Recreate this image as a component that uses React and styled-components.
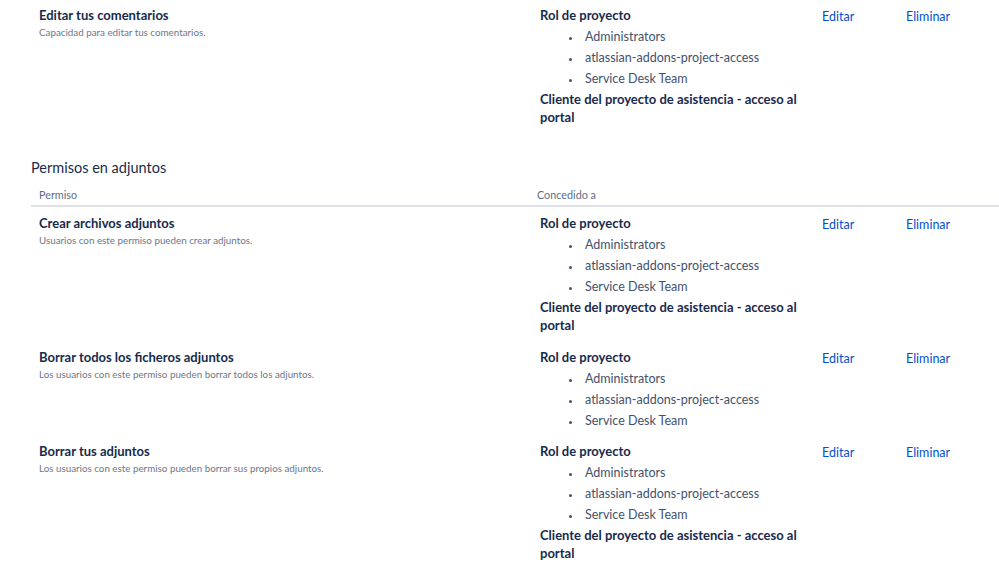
import React from 'react';
import styled, { createGlobalStyle } from 'styled-components';

const Global = createGlobalStyle`
  html, body { margin: 0; padding: 0; background: #fff; }
  body {
    font-family: Lato, "Open Sans", sans-serif;
    color: #172b4d;
    overflow: hidden;
  }
`;

const Page = styled.div`
  padding: 0 0 0 31px;
  margin-top: -1px;
`;

const SectionTitle = styled.h3`
  margin: 0;
  padding: 25px 0 0;
  font-size: 14.5px;
  font-weight: 400;
  line-height: 20px;
  color: #172b4d;
`;

const Grid = styled.div`
  display: grid;
  grid-template-columns: 498px 285px 84px 1fr;
`;

const HeadRow = styled(Grid)`
  margin-top: 6px;
  border-bottom: 2px solid #dfe1e6;
`;

const HeadCell = styled.div`
  padding: 3px 8px 2px;
  font-size: 10.8px;
  line-height: 16px;
  color: #5e6c84;
`;

const Row = styled(Grid)`
  padding: 7px 0;
`;

const Cell = styled.div`
  padding: 0 8px 0 ${p => (p.$grant ? 11 : 8)}px;
`;

const Title = styled.div`
  font-size: 13px;
  font-weight: 700;
  line-height: 18px;
  color: #172b4d;
`;

const Desc = styled.div`
  margin-top: 1px;
  font-size: 9.8px;
  line-height: 14px;
  color: #6b778c;
`;

const GroupName = styled.div`
  font-size: 13px;
  font-weight: 700;
  line-height: 18px;
  color: #172b4d;
  max-width: 262px;
  margin-top: ${p => (p.$first ? 0 : 2)}px;
`;

const List = styled.ul`
  margin: 0;
  padding: 1px 0 0 42px;
  list-style: disc;
  font-size: 12.5px;
  color: #42526e;
  &:last-child { margin-bottom: -2px; }
`;

const Item = styled.li`
  height: 18px;
  line-height: 18px;
  margin-top: 3px;
  padding-left: 3px;
  &::marker { font-size: 10px; }
`;

const Action = styled.a`
  display: block;
  padding: 2px 8px 0;
  font-size: 12.5px;
  line-height: 18px;
  color: #0052cc;
  text-decoration: none;
  cursor: pointer;
`;

const roles = ['Administrators', 'atlassian-addons-project-access', 'Service Desk Team'];

function PermissionRow({ title, desc, withCustomer }) {
  return (
    <Row>
      <Cell>
        <Title>{title}</Title>
        <Desc>{desc}</Desc>
      </Cell>
      <Cell $grant>
        <GroupName $first>Rol de proyecto</GroupName>
        <List>
          {roles.map(r => <Item key={r}>{r}</Item>)}
        </List>
        {withCustomer && <GroupName>Cliente del proyecto de asistencia - acceso al portal</GroupName>}
      </Cell>
      <div><Action>Editar</Action></div>
      <div><Action>Eliminar</Action></div>
    </Row>
  );
}

export default function App() {
  return (
    <Page>
      <Global />
      <PermissionRow
        title="Editar tus comentarios"
        desc="Capacidad para editar tus comentarios."
        withCustomer
      />
      <SectionTitle>Permisos en adjuntos</SectionTitle>
      <HeadRow>
        <HeadCell>Permiso</HeadCell>
        <HeadCell>Concedido a</HeadCell>
        <HeadCell />
        <HeadCell />
      </HeadRow>
      <PermissionRow
        title="Crear archivos adjuntos"
        desc="Usuarios con este permiso pueden crear adjuntos."
        withCustomer
      />
      <PermissionRow
        title="Borrar todos los ficheros adjuntos"
        desc="Los usuarios con este permiso pueden borrar todos los adjuntos."
      />
      <PermissionRow
        title="Borrar tus adjuntos"
        desc="Los usuarios con este permiso pueden borrar sus propios adjuntos."
        withCustomer
      />
    </Page>
  );
}
